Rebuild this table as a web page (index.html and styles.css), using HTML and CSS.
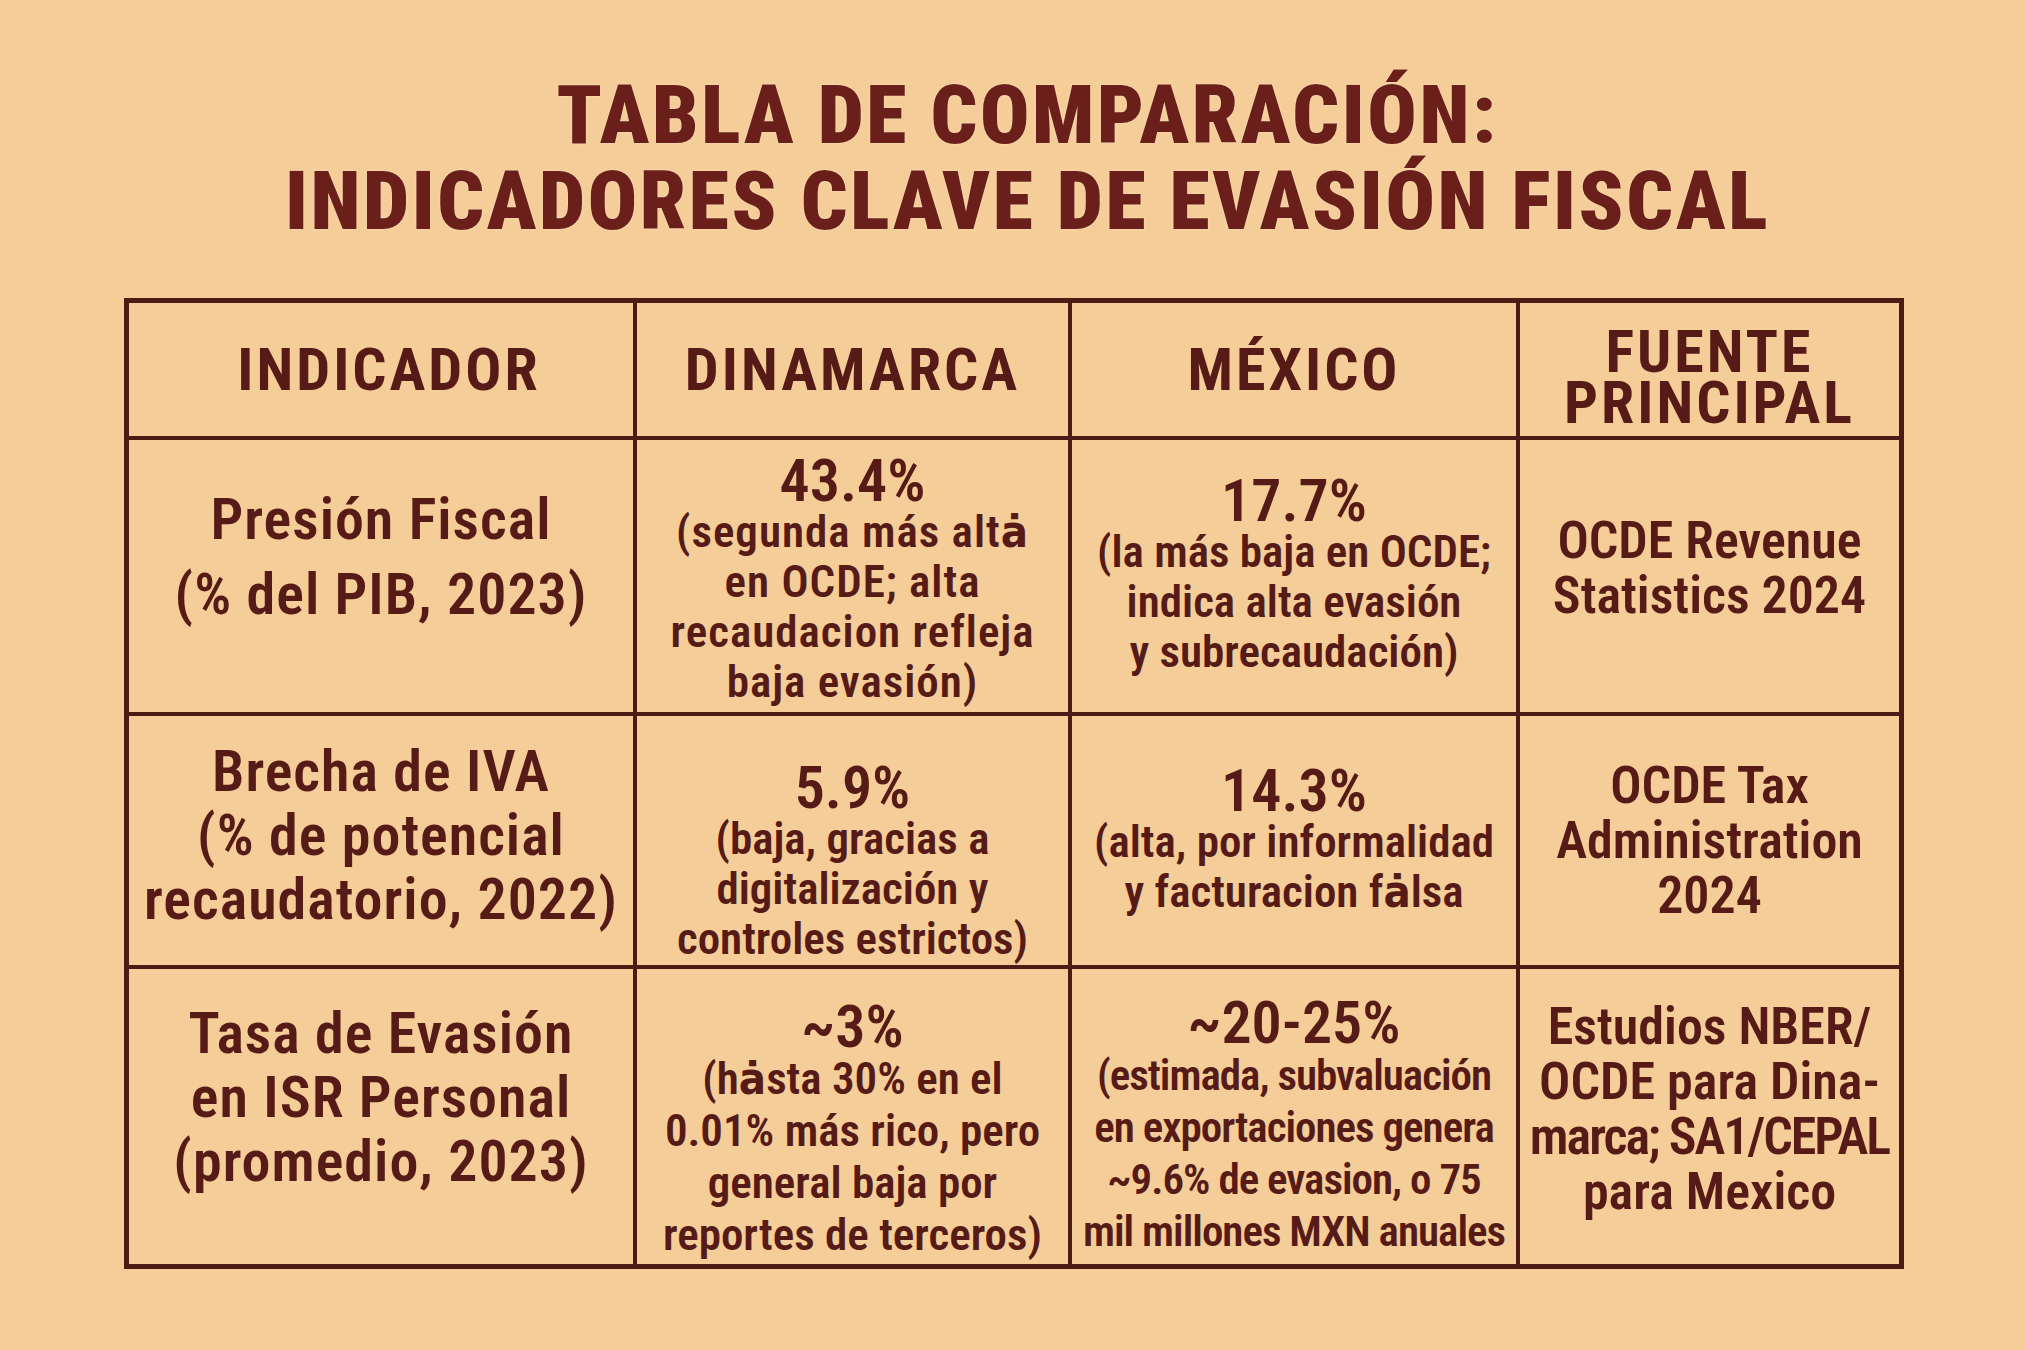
FILE: index.html
```html
<!DOCTYPE html>
<html lang="es">
<head>
<meta charset="utf-8">
<title>Tabla de comparación</title>
<link rel="stylesheet" href="styles.css">
</head>
<body>
<main class="page">
  <h1 class="title">TABLA DE COMPARACIÓN:<br>INDICADORES CLAVE DE EVASIÓN FISCAL</h1>
  <div class="table">
    <div class="cell head shift-r">INDICADOR</div>
    <div class="cell head">DINAMARCA</div>
    <div class="cell head">MÉXICO</div>
    <div class="cell head last-col two">FUENTE<br>PRINCIPAL</div>

    <div class="cell label r1-label">Presión Fiscal<br>(% del PIB, 2023)</div>
    <div class="cell data r1-dk"><span class="val">43.4%</span><span class="sub">(segunda más altȧ<br>en OCDE; alta<br>recaudacion refleja<br>baja evasión)</span></div>
    <div class="cell data"><span class="val">17.7%</span><span class="sub">(la más baja en OCDE;<br>indica alta evasión<br>y subrecaudación)</span></div>
    <div class="cell source last-col up-sm"><p class="txt">OCDE Revenue<br>Statistics 2024</p></div>

    <div class="cell label r2-label">Brecha de IVA<br>(% de potencial<br>recaudatorio, 2022)</div>
    <div class="cell data down-lg"><span class="val">5.9%</span><span class="sub">(baja, gracias a<br>digitalización y<br>controles estrictos)</span></div>
    <div class="cell data"><span class="val">14.3%</span><span class="sub">(alta, por informalidad<br>y facturacion fȧlsa</span></div>
    <div class="cell source last-col"><p class="txt">OCDE Tax<br>Administration<br>2024</p></div>

    <div class="cell label last-row r3-label">Tasa de Evasión<br>en ISR Personal<br>(promedio, 2023)</div>
    <div class="cell data last-row r3 down-md"><span class="val">~3%</span><span class="sub">(hȧsta 30% en el<br>0.01% más rico, pero<br>general baja por<br>reportes de terceros)</span></div>
    <div class="cell data last-row r3 r3-mx down-sm"><span class="val">~20-25%</span><span class="sub">(estimada, subvaluación<br>en exportaciones genera<br>~9.6% de evasion, o 75<br>mil millones MXN anuales</span></div>
    <div class="cell source last-col last-row up-sm"><p class="txt">Estudios NBER/<br>OCDE para Dina-<br><span class="tight">marca; SA1/CEPAL</span><br>para Mexico</p></div>
  </div>
</main>
</body>
</html>
```

FILE: styles.css
```css
* { box-sizing: border-box; }

html, body {
  margin: 0;
  padding: 0;
  background: #f5cd99;
}

body {
  font-family: "Roboto", "DejaVu Sans Condensed", sans-serif;
  font-stretch: 75%;
  color: #561b16;
  width: 2025px;
  height: 1350px;
  overflow: hidden;
}

.page {
  display: flex;
  flex-direction: column;
  align-items: flex-start;
}

.title {
  align-self: center;
  margin: 72px 0 0 0;
  padding-left: 30px;
  font-family: "Roboto", sans-serif;
  font-stretch: 87.5%;
  font-size: 82px;
  line-height: 86px;
  font-weight: 900;
  letter-spacing: 2.6px;
  text-align: center;
  color: #6a1f1a;
  text-shadow: 0 0 2px #fbe6c6;
}

.table {
  margin: 54px 0 0 124px;
  display: grid;
  grid-template-columns: 508px 435px 448px 379px;
  grid-template-rows: 137px 276px 253px 295px;
  border: 5px solid #4e1a14;
}

.cell {
  border-right: 4px solid #4e1a14;
  border-bottom: 4px solid #4e1a14;
  display: flex;
  flex-direction: column;
  align-items: center;
  justify-content: center;
  text-align: center;
  white-space: nowrap;
}

.txt { margin: 0; }

.last-col { border-right: none; }
.last-row { border-bottom: none; }

.up-sm { padding-bottom: 16px; }
.down-lg { padding-top: 44px; }
.down-md { padding-top: 28px; }
.down-sm { padding-top: 20px; }

.head {
  font-size: 60px;
  font-weight: 700;
  letter-spacing: 3px;
  line-height: 51px;
}

.head.shift-r { padding-left: 16px; }
.head.two { padding-top: 14px; }

.label {
  font-size: 58px;
  line-height: 64px;
  font-weight: 600;
  letter-spacing: 1px;
}

.r1-label {
  line-height: 75px;
  padding-bottom: 39px;
}

.r2-label { padding-bottom: 12px; }
.r3-label { padding-bottom: 40px; }

.data .val {
  font-size: 60px;
  line-height: 52px;
  font-weight: 600;
}

.data .sub {
  font-size: 45px;
  line-height: 50px;
  font-weight: 600;
}

.r1-dk { padding-top: 10px; }
.r1-dk .sub { letter-spacing: 1px; }

.r3 .sub { line-height: 52px; }
.r3-mx .sub {
  font-size: 43px;
  letter-spacing: -1px;
}

.source {
  font-size: 52px;
  line-height: 55px;
  font-weight: 600;
}

.tight { letter-spacing: -2px; }
```
